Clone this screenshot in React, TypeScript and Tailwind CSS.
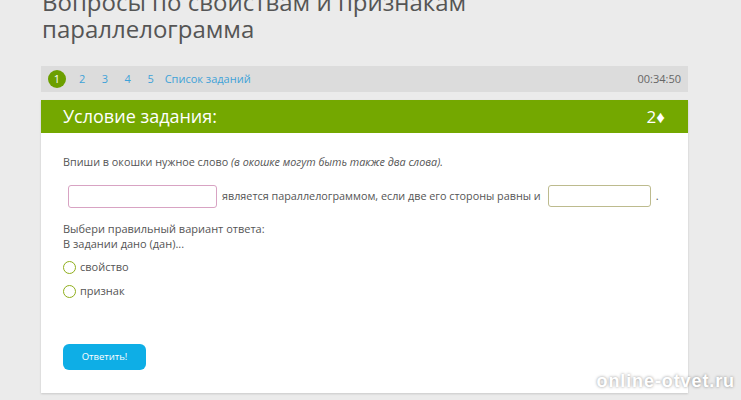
import React from "react";

const font = { fontFamily: '"Open Sans", "Noto Sans", sans-serif' };

function Radio({ label }: { label: string }) {
  return (
    <label className="flex items-center gap-[4px] h-[16px]">
      <span className="w-[13px] h-[13px] rounded-full border-[1.5px] border-[#8fae1b] bg-white" />
      <span className="text-[11px] text-[#555]">{label}</span>
    </label>
  );
}

export default function App() {
  return (
    <div className="relative w-full h-[400px] overflow-hidden bg-[#ebebeb]" style={font}>
      <div className="w-[647px] ml-[41px]">
        <h1 className="-mt-[12px] pl-[1px] text-[24px] leading-[27px] text-[#555] font-normal">
          Вопросы по свойствам и признакам
          <br />
          параллелограмма
        </h1>

        {/* task navigation */}
        <div className="mt-[24px] h-[26px] bg-[#dcdcdc] flex items-center pl-[7px] pr-[7px] text-[11px]">
          <span className="w-[18px] h-[18px] rounded-full bg-[#6c9f00] text-white flex items-center justify-center text-[11px]">
            1
          </span>
          <div className="flex items-center gap-[16.5px] ml-[13px] text-[#3ea2d8]">
            <span>2</span>
            <span>3</span>
            <span>4</span>
            <span>5</span>
          </div>
          <span className="ml-[11px] text-[#3ea2d8]">Список заданий</span>
          <span className="ml-auto text-[#666]">00:34:50</span>
        </div>

        {/* task card */}
        <div className="mt-[8px] shadow-[0_1px_2px_rgba(0,0,0,0.15)]">
          <div className="h-[33px] bg-[#74a800] flex items-center pl-[22px] pr-[23px] text-white">
            <span className="text-[18px]">Условие задания:</span>
            <span className="ml-auto text-[17px]">2♦</span>
          </div>
          <div className="bg-white h-[260px] pl-[22px] pt-[21px] text-[#555] text-[10.8px]">
            <p className="leading-[16px]">
              Впиши в окошки нужное слово <i>(в окошке могут быть также два слова).</i>
            </p>
            <div className="mt-[14px] flex items-center h-[24px] whitespace-nowrap">
              <span className="shrink-0 ml-[5px] w-[149px] h-[23px] rounded-[3px] border border-[#d8a3c3]" />
              <span className="ml-[5px]">является параллелограммом, если две его стороны равны и</span>
              <span className="shrink-0 ml-[7px] w-[103px] h-[22px] rounded-[3px] border border-[#bdbb8e]" />
              <span className="ml-[5px]">.</span>
            </div>
            <p className="mt-[13px] leading-[15px] text-[11px]">
              Выбери правильный вариант ответа:
              <br />В задании дано (дан)...
            </p>
            <div className="mt-[8px] flex flex-col gap-[8px]">
              <Radio label="свойство" />
              <Radio label="признак" />
            </div>
            <button className="mt-[45px] w-[83px] h-[26px] rounded-[6px] bg-[#0eaee6] text-white text-[9.5px]">
              Ответить!
            </button>
          </div>
        </div>
      </div>

      <span
        className="absolute right-[6px] bottom-[5px] text-[18px] font-bold text-white tracking-[0.9px]"
        style={{ fontFamily: '"Liberation Sans", Arial, sans-serif', textShadow: "0 0 3px rgba(0,0,0,0.45)" }}
      >
        online-otvet.ru
      </span>
    </div>
  );
}
